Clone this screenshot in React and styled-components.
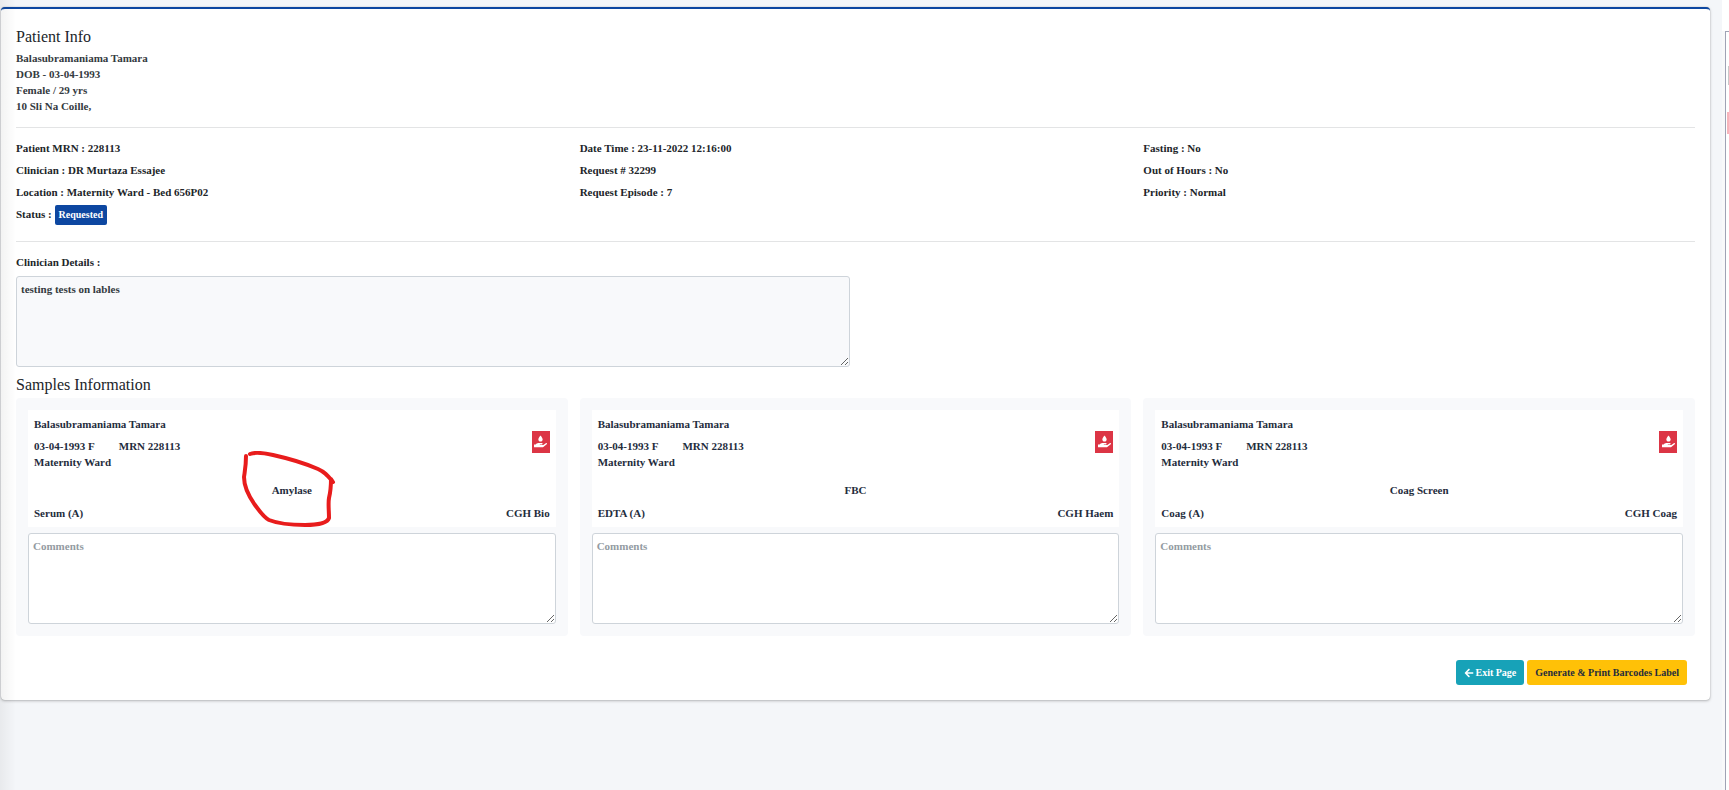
import React from "react";
import styled, { createGlobalStyle } from "styled-components";
import { FaArrowLeft, FaHandHoldingWater } from "react-icons/fa";

const GlobalStyle = createGlobalStyle`
  *, *::before, *::after { box-sizing: border-box; }
  body {
    margin: 0;
    background: #f4f6f9;
    color: #212529;
    font: bold 11px/16px "Liberation Serif", "Times New Roman", serif;
  }
  h2, p { margin: 0; font: inherit; }
`;

const Page = styled.div`
  display: flex;
  min-height: 100vh;
`;

const Main = styled.main`
  position: relative;
  flex: 1;
  min-width: 0;
  padding: 7px 12px 0 1px;
  &::before {
    content: "";
    position: absolute;
    inset: 0 auto 0 0;
    width: 16px;
    background: linear-gradient(to right, rgba(0, 0, 0, 0.05), transparent);
    pointer-events: none;
  }
`;

const Card = styled.section`
  padding: 18px 15px 15px;
  background: #fff;
  border-top: 2px solid #0d47a1;
  border-radius: 4px;
  box-shadow: 0 0 1px rgba(0, 0, 0, 0.3), 0 1px 3px rgba(0, 0, 0, 0.25);
`;

const Title = styled.h2`
  && {
    font-size: 16px;
    font-weight: 400;
    line-height: 20px;
  }
`;

const PatientLines = styled.address`
  padding-top: 3px;
  font-style: normal;
  color: #343a40;
`;

const Line = styled.p``;

const Divider = styled.hr`
  height: 1px;
  margin: 13px 0 9px;
  border: 0;
  background: #e3e4e5;
`;

const Columns = styled.div`
  display: grid;
  grid-template-columns: repeat(3, minmax(0, 1fr));
  column-gap: 12px;
`;

const DetailColumns = styled(Columns)`
  padding-bottom: 3px;
`;

const DetailRow = styled.p`
  && { line-height: 22px; }
`;

const Badge = styled.span`
  display: inline-block;
  padding: 2px 4px;
  border-radius: 2px;
  background: #0d47a1;
  color: #fff;
  font-size: 10px;
  line-height: 16px;
`;

const FieldLabel = styled.label`
  display: block;
  padding-bottom: 3px;
  line-height: 22px;
`;

const TextArea = styled.textarea`
  display: block;
  width: ${(p) => (p.$half ? "calc(50% - 6px)" : "100%")};
  height: 91px;
  padding: 4px;
  border: 1px solid #ced4da;
  border-radius: 3px;
  background: ${(p) => (p.$muted ? "#f8f9fb" : "#fff")};
  color: #343a40;
  font: inherit;
  resize: both;
  &::placeholder { color: #939ba2; opacity: 1; }
`;

const SamplesTitle = styled(Title)`
  padding: 8px 0 3px;
`;

const Sample = styled.article`
  padding: 12px;
  border-radius: 4px;
  background: #f8f9fb;
`;

const SampleLabel = styled.div`
  margin-bottom: 6px;
  padding: 3px 6px;
  background: #fff;
  color: #1f2d3d;
`;

const SampleHead = styled.div`
  display: flex;
  justify-content: space-between;
  align-items: center;
`;

const SampleIds = styled.p`
  display: flex;
  gap: 24px;
  padding-top: 3px;
`;

const IconTag = styled.span`
  display: grid;
  place-items: center;
  width: 18px;
  height: 22px;
  background: #dc3545;
  color: #fff;
`;

const TestName = styled.p`
  && {
    padding: 9px 0 1px;
    line-height: 22px;
    text-align: center;
  }
`;

const SampleFoot = styled.div`
  display: flex;
  justify-content: space-between;
`;

const Marked = styled.span`
  position: relative;
`;

const Scribble = styled.svg`
  position: absolute;
  left: -31px;
  top: -33px;
  width: 96px;
  height: 76px;
  pointer-events: none;
`;

const Actions = styled.div`
  display: flex;
  justify-content: flex-end;
  gap: 3px;
  padding: 24px 8px 0 0;
`;

const Button = styled.button`
  display: flex;
  align-items: center;
  gap: 1px;
  height: 25px;
  padding: 0 8px;
  border: 0;
  border-radius: 3px;
  background: ${(p) => (p.$tone === "info" ? "#17a2b8" : "#ffc107")};
  color: ${(p) => (p.$tone === "info" ? "#fff" : "#1f2d3d")};
  font: bold 10px/16px "Liberation Serif", "Times New Roman", serif;
  cursor: pointer;
`;

const SideEdge = styled.aside`
  width: 7px;
  padding-top: 31px;
  background: #fff;
`;

const SidePanel = styled.div`
  height: 100%;
  margin-left: 3px;
  padding-top: 34px;
  border-top: 1px solid #a0a3b5;
  border-left: 1px solid #a0a3b5;
  box-shadow: -3px 0 0 #f8f9fa;
`;

const Chip = styled.div`
  width: ${(p) => p.$width}px;
  height: ${(p) => p.$height}px;
  margin: 0 0 27px auto;
  background: ${(p) => p.$color};
`;

const patient = ["Balasubramaniama Tamara", "DOB - 03-04-1993", "Female / 29 yrs", "10 Sli Na Coille,"];

const details = [
  ["Patient MRN : 228113", "Clinician : DR Murtaza Essajee", "Location : Maternity Ward - Bed 656P02"],
  ["Date Time : 23-11-2022 12:16:00", "Request # 32299", "Request Episode : 7"],
  ["Fasting : No", "Out of Hours : No", "Priority : Normal"],
];

const samples = [
  { test: "Amylase", tube: "Serum (A)", lab: "CGH Bio", marked: true },
  { test: "FBC", tube: "EDTA (A)", lab: "CGH Haem" },
  { test: "Coag Screen", tube: "Coag (A)", lab: "CGH Coag" },
];

function SampleCard({ sample }) {
  return (
    <Sample>
      <SampleLabel>
        <SampleHead>
          <div>
            <DetailRow>Balasubramaniama Tamara</DetailRow>
            <SampleIds>
              <span>03-04-1993 F</span>
              <span>MRN 228113</span>
            </SampleIds>
            <Line>Maternity Ward</Line>
          </div>
          <IconTag>
            <FaHandHoldingWater size={13} />
          </IconTag>
        </SampleHead>
        <TestName>
          <Marked>
            {sample.test}
            {sample.marked && (
              <Scribble viewBox="0 0 96 76" fill="none" stroke="#e81c1c" strokeWidth="4" strokeLinecap="round" strokeLinejoin="round" aria-hidden="true">
                <path d="M5 5C5 15 4 19 3 26C3 38 9 47 14 54C19 61 24 67 28 69C38 73 53 74 64 74C75 74 86 73 88 67C88 60 87 52 88 47C90 39 90 32 90 28L92 31C87 25 84 21 77 18C61 11 50 8 32 4C23 2 14 1 9 3" />
              </Scribble>
            )}
          </Marked>
        </TestName>
        <SampleFoot>
          <DetailRow>{sample.tube}</DetailRow>
          <DetailRow>{sample.lab}</DetailRow>
        </SampleFoot>
      </SampleLabel>
      <TextArea placeholder="Comments" aria-label={`Comments for ${sample.test}`} />
    </Sample>
  );
}

export default function App() {
  return (
    <Page>
      <GlobalStyle />
      <Main>
        <Card>
          <Title>Patient Info</Title>
          <PatientLines>
            {patient.map((line) => (
              <Line key={line}>{line}</Line>
            ))}
          </PatientLines>
          <Divider />
          <DetailColumns>
            {details.map((column, i) => (
              <div key={column[0]}>
                {column.map((line) => (
                  <DetailRow key={line}>{line}</DetailRow>
                ))}
                {i === 0 && (
                  <DetailRow>
                    Status : <Badge>Requested</Badge>
                  </DetailRow>
                )}
              </div>
            ))}
          </DetailColumns>
          <Divider />
          <FieldLabel htmlFor="clinician-details">Clinician Details :</FieldLabel>
          <TextArea id="clinician-details" $half $muted readOnly defaultValue="testing tests on lables" />
          <SamplesTitle>Samples Information</SamplesTitle>
          <Columns>
            {samples.map((sample) => (
              <SampleCard key={sample.test} sample={sample} />
            ))}
          </Columns>
          <Actions>
            <Button type="button" $tone="info">
              <FaArrowLeft size={10} />
              Exit Page
            </Button>
            <Button type="button" $tone="warning">
              Generate &amp; Print Barcodes Label
            </Button>
          </Actions>
        </Card>
      </Main>
      <SideEdge>
        <SidePanel>
          <Chip $width={1} $height={19} $color="#c8c8c8" />
          <Chip $width={2} $height={22} $color="#f8b4bb" />
        </SidePanel>
      </SideEdge>
    </Page>
  );
}
